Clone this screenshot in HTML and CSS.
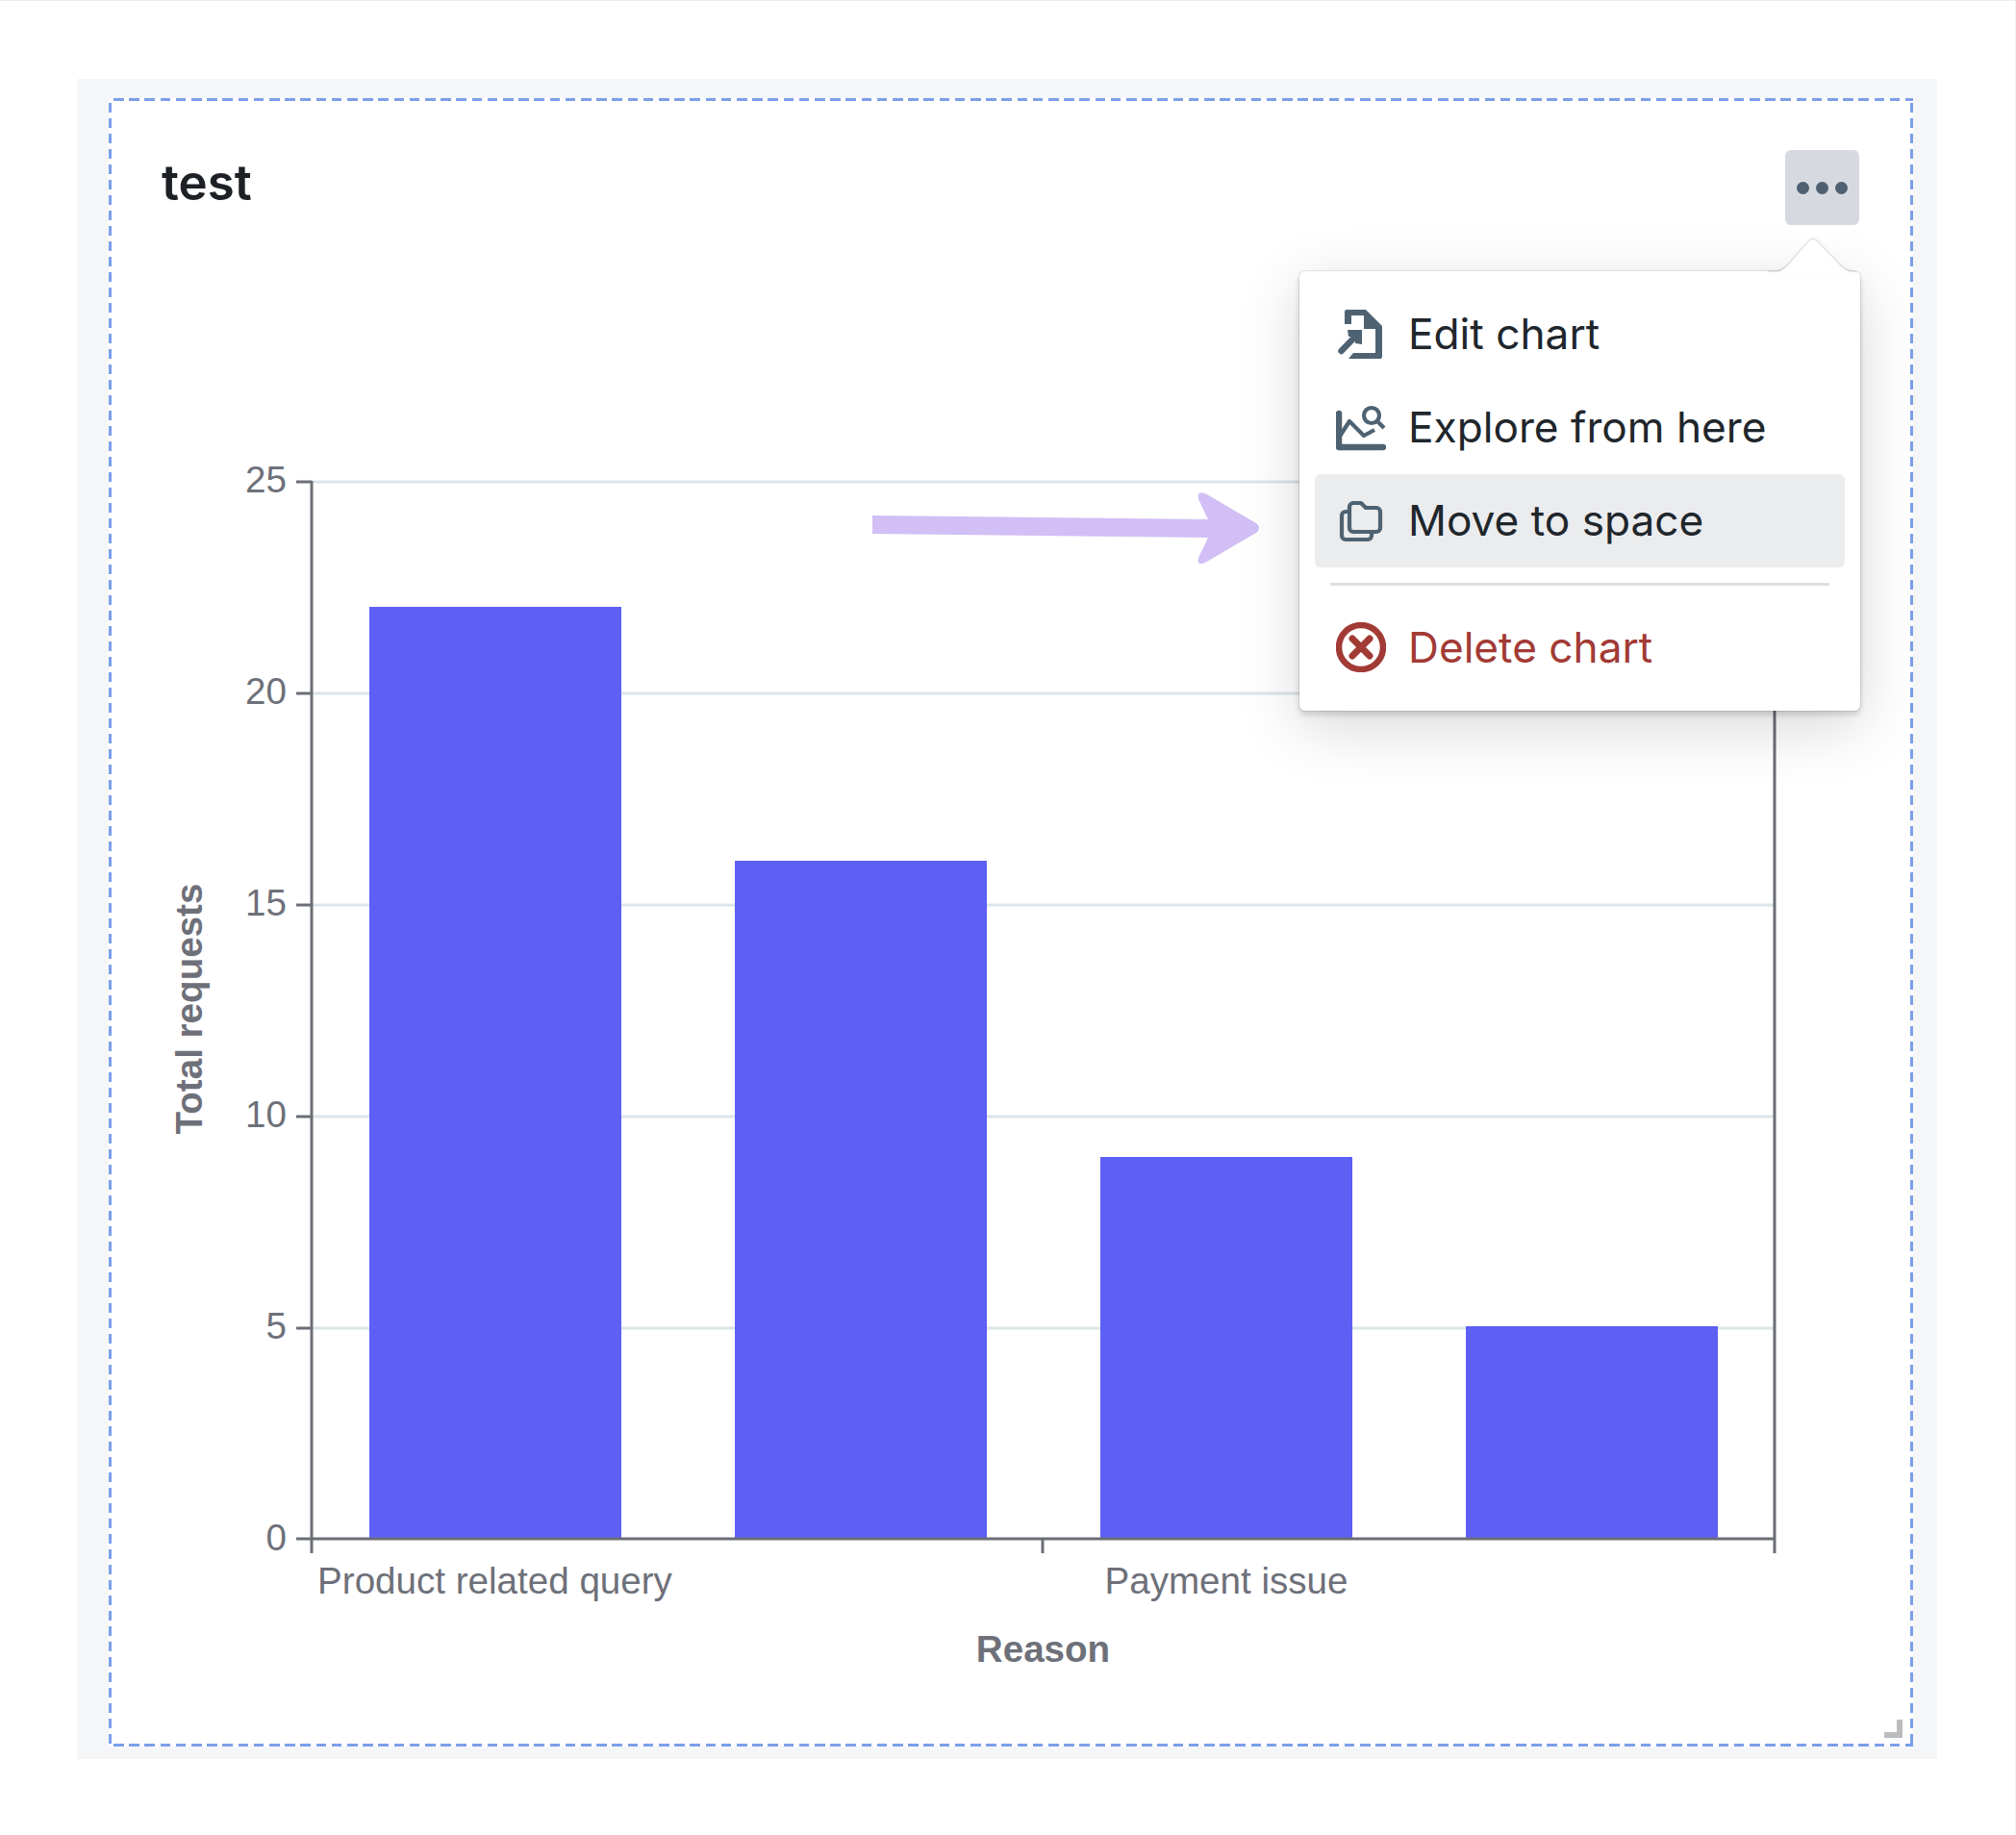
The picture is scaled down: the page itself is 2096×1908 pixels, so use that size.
FILE: index.html
```html
<!DOCTYPE html>
<html lang="en">
<head>
<meta charset="utf-8">
<title>test</title>
<link rel="stylesheet" href="styles.css">
</head>
<body>
<main class="panel">
  <section class="frame">
    <header class="head">
      <h1 class="title">test</h1>
      <button class="more" aria-label="More"><i></i><i></i><i></i></button>
    </header>
    <svg class="chart" viewBox="116 234 1870 1579" aria-label="Total requests by reason">
      <g class="grid">
        <line x1="324" x2="1845" y1="501" y2="501"/>
        <line x1="324" x2="1845" y1="721" y2="721"/>
        <line x1="324" x2="1845" y1="941" y2="941"/>
        <line x1="324" x2="1845" y1="1161" y2="1161"/>
        <line x1="324" x2="1845" y1="1381" y2="1381"/>
      </g>
      <g class="bars">
        <rect x="384" y="631" width="262" height="969"/>
        <rect x="764" y="895" width="262" height="705"/>
        <rect x="1144" y="1203" width="262" height="397"/>
        <rect x="1524" y="1379" width="262" height="221"/>
      </g>
      <g class="axis">
        <line x1="324" x2="324" y1="500" y2="1615"/>
        <line x1="1845" x2="1845" y1="500" y2="1615"/>
        <line x1="324" x2="1845" y1="1600" y2="1600"/>
        <line x1="1084" x2="1084" y1="1600" y2="1615"/>
        <line x1="308" x2="324" y1="501" y2="501"/>
        <line x1="308" x2="324" y1="721" y2="721"/>
        <line x1="308" x2="324" y1="941" y2="941"/>
        <line x1="308" x2="324" y1="1161" y2="1161"/>
        <line x1="308" x2="324" y1="1381" y2="1381"/>
        <line x1="308" x2="324" y1="1600" y2="1600"/>
      </g>
      <g class="ticks">
        <text x="298" y="512">25</text>
        <text x="298" y="732">20</text>
        <text x="298" y="952">15</text>
        <text x="298" y="1172">10</text>
        <text x="298" y="1392">5</text>
        <text x="298" y="1612">0</text>
      </g>
      <g class="cats">
        <text x="514.500" y="1657">Product related query</text>
        <text x="1275" y="1657">Payment issue</text>
      </g>
      <text class="axis-name" x="1084.500" y="1728">Reason</text>
      <text class="axis-name" transform="translate(210 1049) rotate(-90)">Total requests</text>
      <path class="pointer" d="M907 536 L1256 540 L1246 519 Q1244 510 1253 513 L1306 544 Q1312 549 1306 554 L1253 585 Q1244 589 1246 580 L1256 559 L907 555 Z"/>
    </svg>
    <svg class="grip" viewBox="0 0 19 19"><path d="M13 0h6v19H0v-6h13z"/></svg>
    <nav class="menu">
      <svg class="caret" viewBox="0 0 92 38"><path d="M0 36 H6 Q14 36 20 30 L43 4 Q47 0 51 4 L76 30 Q82 36 90 36 H92 V38 H0 Z"/></svg>
      <a class="item">
        <svg class="icon" viewBox="0 0 52 52"><path class="solid" d="M9 3a2 2 0 0 1 2-2h20l17 17v32a2 2 0 0 1-2 2H13l5-6h23V21H29V7H16v9H9z"/><path class="thick" d="M5.500 44 20 29"/><path class="solid" d="M12 22h15v15l-7-1V29h-7z"/></svg>
        <span>Edit chart</span>
      </a>
      <a class="item">
        <svg class="icon" viewBox="0 0 52 52"><path class="thick" d="M3 12v35h46"/><path class="thin" d="M3 37 14 20l15 15 11-6"/><circle class="thin" cx="37" cy="14" r="8"/><path class="thin" d="M43 20l7 7"/></svg>
        <span>Explore from here</span>
      </a>
      <a class="item active">
        <svg class="icon" viewBox="0 0 52 52"><path class="thin" d="M14 24V12a4 4 0 0 1 4-4h8l5 5h11a4 4 0 0 1 4 4v17a4 4 0 0 1-4 4H18a4 4 0 0 1-4-4z"/><path class="thin" d="M14 17h-4a4 4 0 0 0-4 4v21a4 4 0 0 0 4 4h23a4 4 0 0 0 4-4v-4"/></svg>
        <span>Move to space</span>
      </a>
      <hr class="rule">
      <a class="item danger">
        <svg class="icon" viewBox="0 0 52 52"><circle class="thick" cx="26" cy="26" r="23"/><path class="cross" d="M17 17l18 18M35 17 17 35"/></svg>
        <span>Delete chart</span>
      </a>
    </nav>
  </section>
</main>
</body>
</html>
```
FILE: styles.css
```css
* { box-sizing: border-box; }
html, body { margin: 0; background: #fff; }
body {
  width: 2096px;
  height: 1908px;
  padding: 81px 81px 0 80px;
  border-top: 1px solid #ececee;
  border-right: 1px solid #f1f1f3;
  font-family: Inter, "Liberation Sans", sans-serif;
}
.panel {
  height: 1747px;
  padding: 20px 25px 13px 33px;
  background: #f5f6f8;
}
.frame {
  --dash: #7c9fea;
  --run-x: repeating-linear-gradient(90deg, transparent 0 5px, var(--dash) 5px 15.500px, transparent 15.500px 16.200px);
  --run-y: repeating-linear-gradient(180deg, transparent 0 5px, var(--dash) 5px 15.500px, transparent 15.500px 16px);
  position: relative;
  height: 1714px;
  border: 3px solid transparent;
  background:
    var(--run-x) 0 0 / 100% 3px no-repeat border-box,
    var(--run-x) 0 100% / 100% 3px no-repeat border-box,
    var(--run-y) 0 0 / 3px 100% no-repeat border-box,
    var(--run-y) 100% 0 / 3px 100% no-repeat border-box,
    #fff;
  background-clip: border-box;
}
.head {
  display: flex;
  justify-content: space-between;
  align-items: flex-start;
  padding: 51px 53px 0 52px;
  height: 129px;
}
.title {
  margin: 0;
  font-size: 51px;
  line-height: 68px;
  font-weight: 600;
  color: #1d2125;
}
.more {
  display: flex;
  justify-content: center;
  align-items: center;
  gap: 7px;
  width: 77px;
  height: 78px;
  padding: 0;
  border: 0;
  border-radius: 6px;
  background: #d6dae0;
}
.more i {
  width: 13px;
  height: 13px;
  border-radius: 50%;
  background: #4e6071;
}
.chart {
  display: block;
  width: 1870px;
  height: 1579px;
}
.grid line { stroke: #dce5ea; stroke-width: 3; }
.bars rect { fill: #5d5ff5; }
.axis line { stroke: #6b6e76; stroke-width: 3; }
.ticks text, .cats text, .axis-name {
  font-family: "Liberation Sans", Arial, sans-serif;
  font-size: 38.600px;
  fill: #6e7079;
}
.ticks text { text-anchor: end; }
.cats text, .axis-name { text-anchor: middle; }
.axis-name { font-weight: 700; }
.pointer { fill: #d2bff5; }
.grip {
  position: absolute;
  left: 1843px;
  top: 1683px;
  width: 19px;
  height: 19px;
  fill: #bbbcbe;
}
.menu {
  position: absolute;
  left: 1235px;
  top: 177px;
  width: 583px;
  height: 457px;
  padding: 17px 16px 0;
  background: #fff;
  border-radius: 6px;
  box-shadow: 0 0 0 1px rgba(0,0,0,.08), 0 4px 6px rgba(0,0,0,.16), 0 16px 64px rgba(0,0,0,.16);
}
.caret {
  position: absolute;
  left: 487px;
  top: -35px;
  width: 92px;
  height: 38px;
  fill: #fff;
  filter: drop-shadow(0 -1px 1px rgba(0,0,0,.18));
}
.item {
  display: flex;
  align-items: center;
  gap: 23px;
  height: 97px;
  padding: 0 0 2px 22px;
  border-radius: 6px;
  font-size: 44.200px;
  color: #20262c;
}
.item.active { background: #ebecee; }
.item.danger { color: #a23a35; }
.icon {
  flex: none;
  width: 52px;
  height: 52px;
  fill: none;
  stroke: #4e6272;
}
.danger .icon { stroke: #a23a35; }
.solid { fill: #4e6272; stroke: none; }
.thick { stroke-width: 6.500; stroke-linecap: round; stroke-linejoin: round; }
.thin { stroke-width: 4.200; stroke-linejoin: round; }
.cross { stroke-width: 7; stroke-linecap: round; }
.rule {
  height: 3px;
  margin: 16px 16px;
  border: 0;
  background: #dcdfe3;
}
```
